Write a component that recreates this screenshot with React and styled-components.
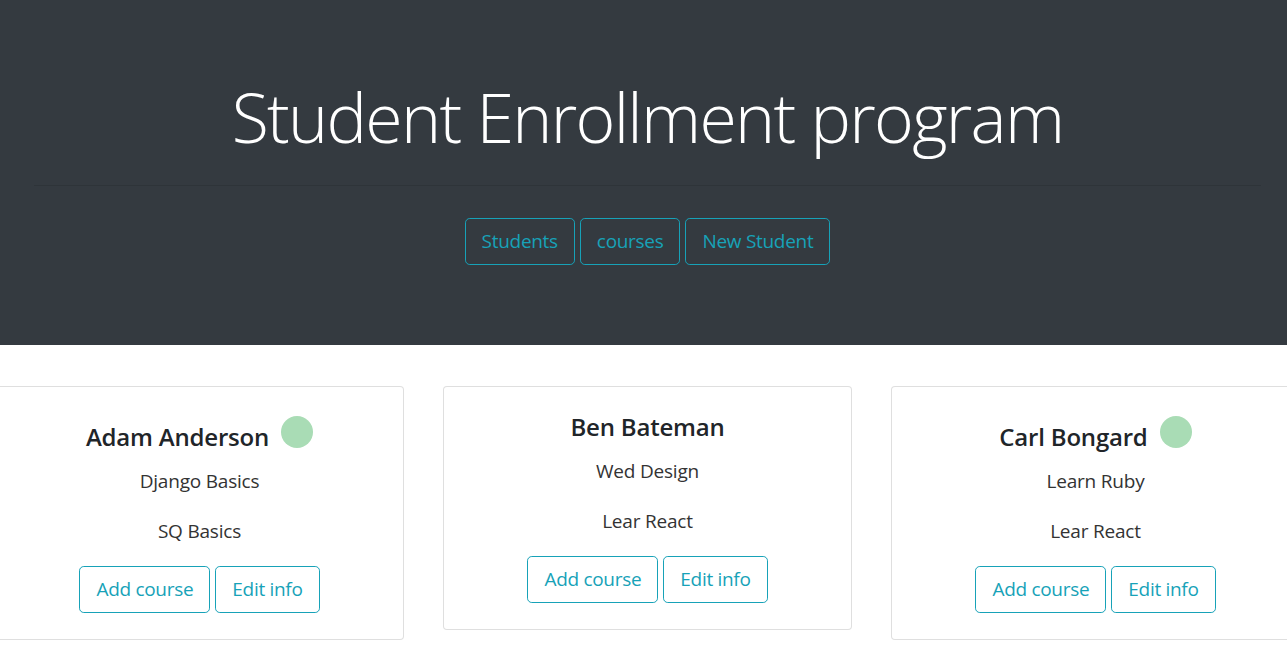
import styled, { createGlobalStyle } from 'styled-components';

const GlobalStyle = createGlobalStyle`
    body {
        margin: 0;
        background: #fff;
        font-family: "Open Sans", "Noto Sans", sans-serif;
        color: #212529;
        overflow-x: hidden;
    }
`;

const students = [
    { id: 1, name: 'Adam Anderson', courses: ['Django Basics', 'SQ Basics'], active: true },
    { id: 2, name: 'Ben Bateman', courses: ['Wed Design', 'Lear React'], active: false },
    { id: 3, name: 'Carl Bongard', courses: ['Learn Ruby', 'Lear React'], active: true },
];

const Jumbotron = styled.header`
    background: #343a40;
    padding: 74px 26px 64px 34px;
    text-align: center;
`;

const Title = styled.h1`
    margin: 0;
    font-size: 68px;
    font-weight: 300;
    line-height: 86px;
    letter-spacing: -1.7px;
    color: #fff;
`;

const Divider = styled.hr`
    margin: 25px 0 32px;
    border: 0;
    border-top: 1px solid rgba(0, 0, 0, 0.1);
`;

const Nav = styled.nav`
    display: flex;
    justify-content: center;
    gap: 5px;
    margin-bottom: 16px;
`;

const OutlineButton = styled.button`
    font-family: inherit;
    font-size: 19px;
    letter-spacing: -0.3px;
    line-height: 29px;
    padding: 8px 16px;
    color: #17a2b8;
    background: transparent;
    border: 1px solid #17a2b8;
    border-radius: 4.8px;
    cursor: pointer;
`;

const CardRow = styled.main`
    display: flex;
    justify-content: center;
    align-items: flex-start;
    gap: 39px;
    margin-top: 41px;
    padding-left: 8px;
`;

const Card = styled.section`
    flex: 0 0 409px;
    box-sizing: border-box;
    background: #fff;
    border: 1px solid rgba(0, 0, 0, 0.125);
    border-radius: 4px;
    padding: 25px 20px 26px;
    text-align: center;
`;

const NameRow = styled.div`
    display: flex;
    justify-content: center;
    align-items: flex-end;
    gap: 12px;
    margin-bottom: 18px;
`;

const Name = styled.h4`
    margin: 0;
    font-size: 24px;
    font-weight: 600;
    line-height: 29px;
    letter-spacing: -0.2px;
    color: #212529;
`;

const StatusDot = styled.span`
    width: 32px;
    height: 32px;
    margin: 4px 0 3px;
    border-radius: 50%;
    background: #a9dcb5;
`;

const Course = styled.p`
    margin: 0 0 26px;
    font-size: 19px;
    line-height: 24px;
    letter-spacing: -0.2px;
    color: #333;

    &:last-of-type {
        margin-bottom: 23px;
    }
`;

const Actions = styled.div`
    display: flex;
    justify-content: center;
    gap: 5px;
`;

const App = () => (
    <>
        <GlobalStyle />
        <Jumbotron>
            <Title>Student Enrollment program</Title>
            <Divider />
            <Nav>
                <OutlineButton>Students</OutlineButton>
                <OutlineButton>courses</OutlineButton>
                <OutlineButton>New Student</OutlineButton>
            </Nav>
        </Jumbotron>
        <CardRow>
            { students.map((student) => (
                <Card key={student.id}>
                    <NameRow>
                        <Name>{student.name}</Name>
                        { student.active && <StatusDot /> }
                    </NameRow>
                    { student.courses.map((course) => <Course key={course}>{course}</Course>) }
                    <Actions>
                        <OutlineButton>Add course</OutlineButton>
                        <OutlineButton>Edit info</OutlineButton>
                    </Actions>
                </Card>
            )) }
        </CardRow>
    </>
);

export default App;
